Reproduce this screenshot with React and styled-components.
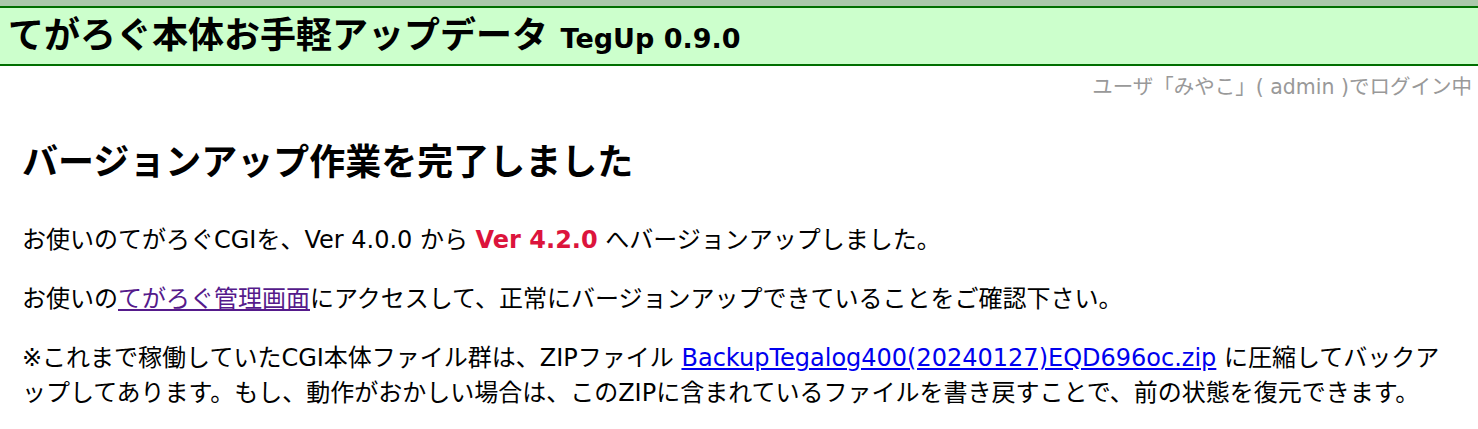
import React from 'react';
import styled, { createGlobalStyle } from 'styled-components';

const GlobalStyle = createGlobalStyle`
  html, body {
    margin: 0;
    padding: 0;
    background: #ffffff;
  }
  body {
    font-family: "DejaVu Sans", "Noto Sans CJK JP", sans-serif;
    color: #000000;
  }
`;

const App = () => {
  return (
    <>
      <GlobalStyle />
      <TopStrip />
      <Header>
        <Title>
          てがろぐ本体お手軽アップデータ <Version>TegUp 0.9.0</Version>
        </Title>
      </Header>
      <LoginInfo>ユーザ「みやこ」( admin )でログイン中</LoginInfo>
      <Main>
        <Heading>バージョンアップ作業を完了しました</Heading>
        <Para>
          お使いのてがろぐCGIを、Ver 4.0.0 から <NewVer>Ver 4.2.0</NewVer> へバージョンアップしました。
        </Para>
        <Para>
          お使いの<VisitedLink href="#">てがろぐ管理画面</VisitedLink>にアクセスして、正常にバージョンアップできていることをご確認下さい。
        </Para>
        <Para>
          ※これまで稼働していたCGI本体ファイル群は、ZIPファイル <FileLink href="#">BackupTegalog400(20240127)EQD696oc.zip</FileLink> に圧縮してバックアップしてあります。もし、動作がおかしい場合は、このZIPに含まれているファイルを書き戻すことで、前の状態を復元できます。
        </Para>
      </Main>
    </>
  );
};

export default App;

const TopStrip = styled.div`
  height: 6px;
  background-color: #aac8aa;
`;

const Header = styled.header`
  height: 56px;
  display: flex;
  align-items: center;
  padding: 0 8px;
  background-color: #ccffcc;
  border-top: 2px solid #006f00;
  border-bottom: 2px solid #006f00;
`;

const Title = styled.h1`
  margin: 0;
  font-size: 36px;
  font-weight: bold;
  line-height: 1.2;
  white-space: nowrap;
`;

const Version = styled.span`
  font-size: 27px;
`;

const LoginInfo = styled.div`
  margin-top: 6px;
  padding-right: 6px;
  text-align: right;
  font-size: 20.5px;
  line-height: 30px;
  color: #999999;
`;

const Main = styled.main`
  padding: 0 30px 0 22px;
`;

const Heading = styled.h2`
  margin: 39px 0 39px;
  font-size: 36px;
  font-weight: bold;
  line-height: 43px;
`;

const Para = styled.p`
  margin: 0 0 24px;
  font-size: 24px;
  line-height: 35px;
`;

const NewVer = styled.strong`
  color: #dc143c;
  font-weight: bold;
`;

const VisitedLink = styled.a`
  color: #551a8b;
  text-decoration: underline;
`;

const FileLink = styled.a`
  color: #0000ee;
  text-decoration: underline;
`;
